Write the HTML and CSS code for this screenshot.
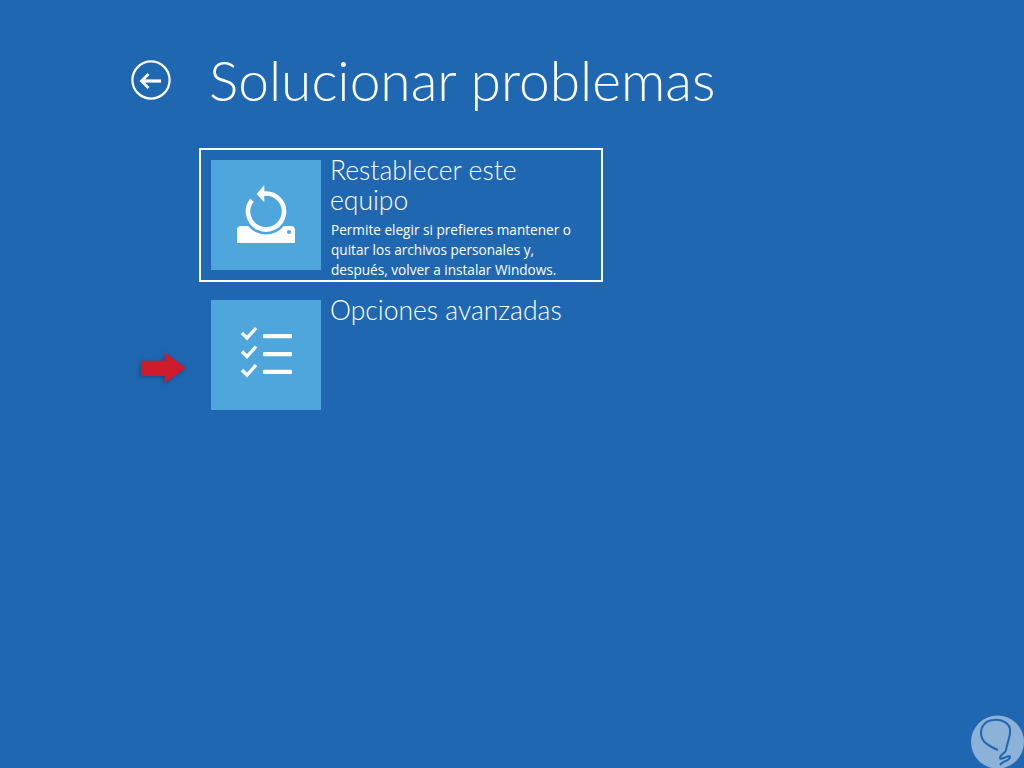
FILE: index.html
```html
<!DOCTYPE html>
<html lang="es">
<head>
<meta charset="utf-8">
<title>Solucionar problemas</title>
<link rel="stylesheet" href="styles.css">
</head>
<body>
<main class="screen">
  <header class="header">
    <svg class="back" width="40" height="40" viewBox="0 0 40 40" aria-hidden="true">
      <circle cx="20" cy="20" r="18.6" fill="none" stroke="#fff" stroke-width="2.2"/>
      <path d="M11 21H30" stroke="#fff" stroke-width="3.2" fill="none"/>
      <path d="M17.500 14L10.500 21L17.500 28" stroke="#fff" stroke-width="2.8" fill="none"/>
    </svg>
    <h1 class="title">Solucionar problemas</h1>
  </header>
  <section class="list">
    <article class="card card-selected">
      <div class="tile">
        <svg width="110" height="110" viewBox="0 0 110 110" aria-hidden="true">
          <path d="M26 83V70Q26 66 30 66H37.100A23 23 0 0 0 72.900 66H80Q84 66 84 70V83Z" fill="#fff"/>
          <circle cx="78" cy="72" r="2" fill="#4fa6dd"/>
          <path d="M53 33.600A18 18 0 1 1 41 40.200" fill="none" stroke="#fff" stroke-width="4.6"/>
          <path d="M53.300 25V42.300L45.700 34Z" fill="#fff"/>
        </svg>
      </div>
      <div class="body">
        <h2 class="card-title">Restablecer este equipo</h2>
        <p class="card-text">Permite elegir si prefieres mantener o quitar los archivos personales y, después, volver a instalar Windows.</p>
      </div>
    </article>
    <article class="card">
      <div class="tile">
        <svg width="110" height="110" viewBox="0 0 110 110" aria-hidden="true">
          <g fill="none" stroke="#fff" stroke-width="3.3">
            <path d="M31 33L36 38L45 28"/>
            <path d="M31 51.500L36 56.500L45 46.500"/>
            <path d="M31 70L36 75L45 65"/>
          </g>
          <g fill="#fff">
            <rect x="52" y="34" width="29" height="4.300" rx="1"/>
            <rect x="52" y="52" width="29" height="4.300" rx="1"/>
            <rect x="52" y="69.700" width="29" height="4.300" rx="1"/>
          </g>
        </svg>
      </div>
      <div class="body">
        <h2 class="card-title">Opciones avanzadas</h2>
      </div>
    </article>
  </section>
  <svg class="arrow" width="48" height="34" viewBox="0 0 48 34" aria-hidden="true">
    <path d="M1 8.700H24.700V0.300L45.700 16L24.700 31.300V24H1Z" fill="#cf1a2b"/>
  </svg>
  <svg class="mark" width="54" height="54" viewBox="0 0 54 54" aria-hidden="true">
    <circle cx="26.500" cy="27" r="26.500" fill="#8db2d8"/>
    <path d="M27 35C18 31 10 27 10 18C10 10 16 5 23 5C32 4 40 9 39 17C39 23 36 28 35 35C35 38 29 39 29 43C29 46 39 39 39 42C39 46 31 46 29 50" fill="none" stroke="#1f67b1" stroke-width="2"/>
  </svg>
</main>
</body>
</html>
```
FILE: styles.css
```css
* { box-sizing: border-box; }
html, body { margin: 0; height: 100%; }
body {
  background: #1f67b1;
  color: #fff;
  font-family: "Lato", "Open Sans", sans-serif;
  overflow: hidden;
}
.screen { position: relative; width: 1024px; height: 768px; padding: 48px 0 0 131px; }
.header { display: flex; align-items: center; gap: 38px; height: 64px; }
.back { flex: none; }
.title { margin: 0; font-size: 55.1px; font-weight: 300; line-height: 64px; white-space: nowrap; }
.list { display: flex; flex-direction: column; gap: 6px; margin: 36px 0 0 68px; width: 404px; }
.card { display: flex; gap: 10px; padding: 10px; border: 2px solid transparent; height: 134px; }
.card-selected { border-color: #fff; }
.tile { flex: none; width: 110px; height: 110px; background: #4fa6dd; }
.tile svg { display: block; }
.body { min-width: 0; }
.card-title { margin: -5px 0 0 -1px; font-size: 26.5px; font-weight: 300; line-height: 30px; }
.card-text { margin: 5px 0 0; font-family: "Open Sans", sans-serif; font-size: 13.6px; line-height: 20px; font-weight: 400; }
.arrow { position: absolute; left: 140px; top: 352px; filter: drop-shadow(-1px 1px 2px rgba(10, 40, 90, 0.5)); }
.mark { position: absolute; left: 971px; top: 715px; }
```
